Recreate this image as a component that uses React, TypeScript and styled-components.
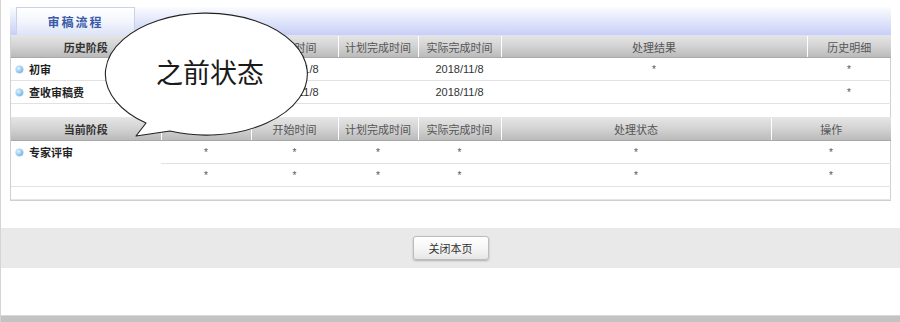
import React from "react";
import styled, { createGlobalStyle } from "styled-components";

const GlobalStyle = createGlobalStyle`
  html, body {
    margin: 0;
    padding: 0;
    background: #ffffff;
  }
  body {
    font-family: "Liberation Sans", "Noto Sans CJK SC", sans-serif;
    font-size: 11px;
    color: #333;
  }
`;

const Frame = styled.div`
  position: relative;
  width: 899px;
  height: 322px;
  border-left: 1px solid #d4d4d4;
  display: flex;
  flex-direction: column;
  overflow: hidden;
`;

const Panel = styled.div`
  margin: 7px 9px 0 9px;
`;

const TabBand = styled.div`
  height: 29px;
  display: flex;
  align-items: flex-end;
  padding-left: 6px;
  background: linear-gradient(#fbfcff 0%, #e3e8fb 45%, #c8cff6 100%);
  border-bottom: 1px solid #dfe3f3;
  box-sizing: border-box;
`;

const Tab = styled.div`
  width: 119px;
  height: 28px;
  box-sizing: border-box;
  border: 1px solid #ccd2e6;
  border-bottom: none;
  background: linear-gradient(#ffffff 0%, #f4f6fd 50%, #dde3f7 100%);
  display: flex;
  align-items: center;
  justify-content: center;
  font-family: "Noto Sans CJK SC", sans-serif;
  font-size: 12px;
  font-weight: 700;
  color: #3a5aa6;
  letter-spacing: 2px;
`;

const TableBox = styled.div`
  border: 1px solid #cfcfcf;
  border-top: none;
`;

const Grid = styled.table`
  width: 100%;
  border-collapse: collapse;
  table-layout: fixed;
`;

const Head = styled.th<{ $strong?: boolean; $h?: number }>`
  height: ${(p) => p.$h ?? 21}px;
  padding: 0;
  white-space: nowrap;
  overflow: hidden;
  background: linear-gradient(#e4e4e4 0%, #d2d2d2 50%, #bababa 100%);
  border-bottom: 1px solid #a9a9a9;
  border-right: 1px solid rgba(255, 255, 255, 0.1);
  font-family: "Noto Sans CJK SC", sans-serif;
  font-size: 11px;
  line-height: 14px;
  font-weight: ${(p) => (p.$strong ? 700 : 400)};
  color: ${(p) => (p.$strong ? "#333" : "#555")};
  text-align: center;
  &:last-child {
    border-right: none;
  }
`;

const Cell = styled.td`
  height: 22px;
  padding: 0;
  white-space: nowrap;
  border-bottom: 1px solid #e2e2e2;
  text-align: center;
  vertical-align: middle;
  font-family: "Liberation Sans", "Noto Sans CJK SC", sans-serif;
  font-size: 11px;
  line-height: 14px;
  color: #333;
`;

const StageCell = styled(Cell)`
  text-align: left;
  vertical-align: top;
  padding-left: 5px;
`;

const Stage = styled.span`
  display: inline-flex;
  align-items: center;
  gap: 6px;
  height: 22px;
  font-family: "Noto Sans CJK SC", sans-serif;
  font-weight: 700;
  color: #222;
`;

const Dot = styled.i`
  width: 7px;
  height: 7px;
  border-radius: 50%;
  background: radial-gradient(circle at 35% 35%, #e6f4ff 0%, #8cc8ef 55%, #4c9fd6 100%);
  box-shadow: 0 0 0 0.5px #9cc8e8;
`;

const Spacer = styled.td<{ $h: number }>`
  height: ${(p) => p.$h}px;
  padding: 0;
  border-bottom: 1px solid #e6e6e6;
`;

const Star = styled.span`
  font-size: 10px;
  color: #555;
`;

const FooterBand = styled.div`
  margin-top: 27px;
  height: 40px;
  background: #e9e9e9;
  display: flex;
  align-items: center;
  justify-content: center;
`;

const Button = styled.button`
  width: 76px;
  height: 24px;
  border: 1px solid #bcbcbc;
  border-radius: 3px;
  background: linear-gradient(#ffffff 0%, #f6f6f6 50%, #e6e6e6 100%);
  box-shadow: 0 1px 2px rgba(0, 0, 0, 0.25);
  font-family: "Noto Sans CJK SC", sans-serif;
  font-size: 11px;
  color: #333;
  padding: 0;
`;

const Fill = styled.div`
  flex: 1;
`;

const BottomBar = styled.div`
  height: 6px;
  background: #c3c3c3;
  border-top: 1px solid #d8d8d8;
`;

const Bubble = styled.div`
  position: absolute;
  left: 103px;
  top: 10px;
  width: 212px;
  height: 132px;
`;

const BubbleText = styled.div`
  position: absolute;
  left: 0;
  right: 0;
  top: 44px;
  text-align: center;
  font-family: "Noto Sans CJK SC", sans-serif;
  font-size: 27px;
  line-height: 36px;
  font-weight: 400;
  color: #1a1a1a;
`;

const historyCols = [150, 90, 87, 80, 83, 306, 84];
const currentCols = [150, 90, 87, 80, 83, 270, 120];

const s = <Star>*</Star>;

export default function App() {
  return (
    <>
      <GlobalStyle />
      <Frame>
        <Panel>
          <TabBand>
            <Tab>审稿流程</Tab>
          </TabBand>
          <TableBox>
            <Grid>
              <colgroup>
                {historyCols.map((w, i) => (
                  <col key={i} style={{ width: w }} />
                ))}
              </colgroup>
              <thead>
                <tr>
                  <Head $strong>历史阶段</Head>
                  <Head></Head>
                  <Head>开始时间</Head>
                  <Head>计划完成时间</Head>
                  <Head>实际完成时间</Head>
                  <Head>处理结果</Head>
                  <Head>历史明细</Head>
                </tr>
              </thead>
              <tbody>
                <tr>
                  <StageCell>
                    <Stage>
                      <Dot />
                      初审
                    </Stage>
                  </StageCell>
                  <Cell></Cell>
                  <Cell>2018/11/8</Cell>
                  <Cell></Cell>
                  <Cell>2018/11/8</Cell>
                  <Cell>{s}</Cell>
                  <Cell>{s}</Cell>
                </tr>
                <tr>
                  <StageCell>
                    <Stage>
                      <Dot />
                      查收审稿费
                    </Stage>
                  </StageCell>
                  <Cell></Cell>
                  <Cell>2018/11/8</Cell>
                  <Cell></Cell>
                  <Cell>2018/11/8</Cell>
                  <Cell></Cell>
                  <Cell>{s}</Cell>
                </tr>
                <tr>
                  <Spacer $h={13} colSpan={7} />
                </tr>
              </tbody>
            </Grid>
            <Grid>
              <colgroup>
                {currentCols.map((w, i) => (
                  <col key={i} style={{ width: w }} />
                ))}
              </colgroup>
              <thead>
                <tr>
                  <Head $strong $h={22}>当前阶段</Head>
                  <Head $h={22}></Head>
                  <Head $h={22}>开始时间</Head>
                  <Head $h={22}>计划完成时间</Head>
                  <Head $h={22}>实际完成时间</Head>
                  <Head $h={22}>处理状态</Head>
                  <Head $h={22}>操作</Head>
                </tr>
              </thead>
              <tbody>
                <tr>
                  <StageCell rowSpan={2}>
                    <Stage>
                      <Dot />
                      专家评审
                    </Stage>
                  </StageCell>
                  <Cell>{s}</Cell>
                  <Cell>{s}</Cell>
                  <Cell>{s}</Cell>
                  <Cell>{s}</Cell>
                  <Cell>{s}</Cell>
                  <Cell>{s}</Cell>
                </tr>
                <tr>
                  <Cell>{s}</Cell>
                  <Cell>{s}</Cell>
                  <Cell>{s}</Cell>
                  <Cell>{s}</Cell>
                  <Cell>{s}</Cell>
                  <Cell>{s}</Cell>
                </tr>
                <tr>
                  <Spacer $h={12} colSpan={7} />
                </tr>
              </tbody>
            </Grid>
          </TableBox>
        </Panel>
        <FooterBand>
          <Button>关闭本页</Button>
        </FooterBand>
        <Fill />
        <BottomBar />

        <Bubble>
          <svg width="212" height="132" viewBox="0 0 212 132">
            <path
              d="M 66 121 A 101 61 0 1 0 42 113 L 32 126 Z"
              fill="#ffffff"
              stroke="#222"
              strokeWidth="1.1"
              strokeLinejoin="round"
            />
          </svg>
          <BubbleText>之前状态</BubbleText>
        </Bubble>
      </Frame>
    </>
  );
}
